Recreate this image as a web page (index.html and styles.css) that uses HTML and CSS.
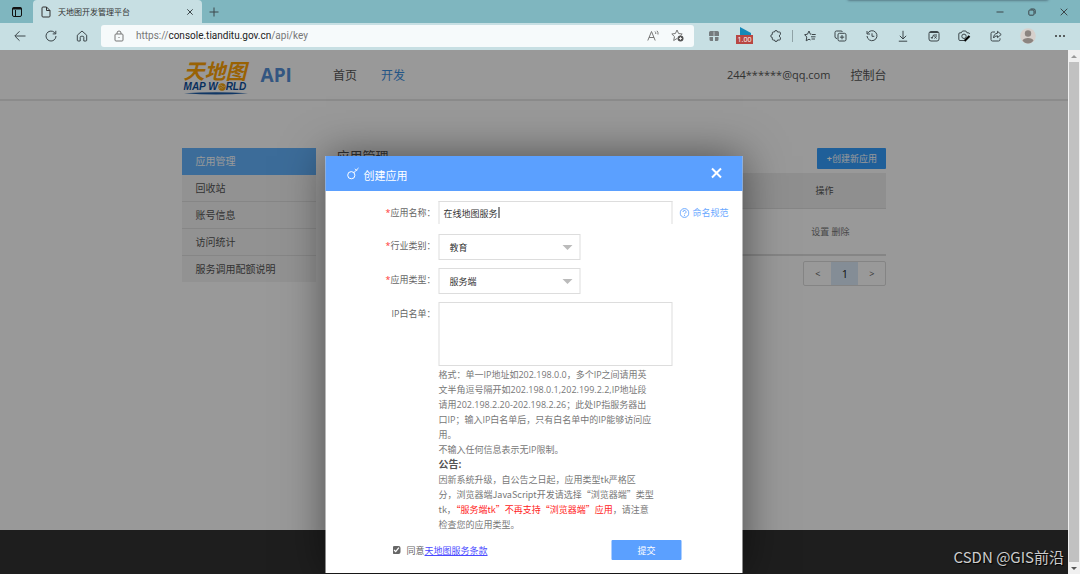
FILE: index.html
```html
<!DOCTYPE html>
<html lang="zh-CN">
<head>
<meta charset="utf-8">
<title>天地图开发管理平台</title>
<link rel="stylesheet" href="styles.css">
</head>
<body>
<div class="browser">
  <div class="tabbar">
    <span class="top-shadow"></span>
    <button class="icon-btn workspace" aria-label="标签页操作"><svg width="12" height="12" viewBox="0 0 12 12"><rect x="1.5" y="1.5" width="9" height="9" rx="1.5"/><path d="M1.5 2.500h9" stroke-width="2"/><path d="M4.500 4v6"/></svg></button>
    <div class="tab">
      <svg width="10" height="12" viewBox="0 0 10 12"><path d="M1 2a1 1 0 0 1 1-1h3.500L9 4.500V10a1 1 0 0 1-1 1H2a1 1 0 0 1-1-1zM5.500 1v3.500H9"/></svg>
      <span class="tab-title">天地图开发管理平台</span>
      <button class="icon-btn" aria-label="关闭标签页"><svg width="8" height="8" viewBox="0 0 8 8"><path d="M1.300 1.300l5.400 5.400M6.700 1.300L1.300 6.700"/></svg></button>
    </div>
    <button class="icon-btn new-tab" aria-label="新建标签页"><svg width="10" height="10" viewBox="0 0 10 10"><path d="M5 .5v9M.5 5h9"/></svg></button>
    <div class="window-controls">
      <button class="icon-btn" aria-label="最小化"><svg width="8" height="8" viewBox="0 0 8 8"><path d="M.5 4h7"/></svg></button>
      <button class="icon-btn" aria-label="还原"><svg width="8" height="8" viewBox="0 0 8 8"><rect x=".8" y="2" width="5.200" height="5.200" rx="1"/><path d="M2.500 1h3.300a1.400 1.400 0 0 1 1.400 1.400v3.300"/></svg></button>
      <button class="icon-btn" aria-label="关闭"><svg width="8" height="8" viewBox="0 0 8 8"><path d="M.7.7l6.600 6.600M7.300.7L.7 7.300"/></svg></button>
    </div>
  </div>

  <div class="toolbar">
    <button class="icon-btn tool" aria-label="后退"><svg width="12" height="12" viewBox="0 0 12 12"><path d="M11.500 6H1M5.500 1.300L.8 6l4.700 4.700"/></svg></button>
    <button class="icon-btn tool" aria-label="刷新"><svg width="12" height="12" viewBox="0 0 12 12"><path d="M11 6A5 5 0 1 1 9.300 2.300L10.600 3.700M10.800.8v3.100H7.700"/></svg></button>
    <button class="icon-btn tool" aria-label="主页"><svg width="12" height="12" viewBox="0 0 12 12"><path d="M1.300 5.200L6 1l4.700 4.200v5a.8.8 0 0 1-.8.8H7.800V7.300a1 1 0 0 0-1-1H5.200a1 1 0 0 0-1 1V11H2.100a.8.8 0 0 1-.8-.8z"/></svg></button>
    <div class="address">
      <svg class="lock" width="10" height="12" viewBox="0 0 10 12"><rect x="1" y="4" width="8" height="7" rx="1"/><path d="M3 4V3a2 2 0 0 1 4 0v1M5 7v1"/></svg>
      <span class="url">https://<b>console.tianditu.gov.cn</b>/api/key</span>
      <button class="icon-btn muted" aria-label="大声朗读"><svg width="12" height="12" viewBox="0 0 12 12"><path d="M.8 10.500L4.500 1.500l3.700 9M2 7.500h5M8 1.500q1 1 .8 2.500M10 .8q1.400 1.500 1 3.700"/></svg></button>
      <button class="icon-btn muted" aria-label="添加到收藏夹"><svg width="13" height="13" viewBox="0 0 13 13"><path d="M6 9.500l-3.300 2 .8-3.900L.8 5l3.600-.5L6 1l1.600 3.500 3.600.5L9.500 6.600"/><circle cx="9.500" cy="9.500" r="3" fill="#555" stroke="none"/><path d="M9.500 8v3M8 9.500h3" stroke="#fff" stroke-width=".8"/></svg></button>
    </div>
    <button class="icon-btn tool" aria-label="扩展"><svg width="12" height="12" viewBox="0 0 12 12"><path d="M1 6V2.500A1.500 1.500 0 0 1 2.500 1h7A1.500 1.500 0 0 1 11 2.500V6zM1.500 7H5v4H3a1.500 1.500 0 0 1-1.500-1.500zM7 7h3.500v2.500A1.500 1.500 0 0 1 9 11H7z" fill="#757b7e" stroke="none"/><path d="M6 1.500V6" stroke="#bcc4c7"/></svg></button>
    <button class="icon-btn tool speed" aria-label="播放速度 1.00"><svg width="12" height="8" viewBox="0 0 12 8"><path d="M1 0l11 6v2H1z" fill="#1689b8" stroke="none"/></svg><span class="badge">1.00</span></button>
    <button class="icon-btn tool" aria-label="扩展程序"><svg width="12" height="12" viewBox="0 0 12 12"><path d="M3.200 2h1.300a1.500 1.500 0 0 1 3 0h2a.9.9 0 0 1 .9.900V4.500a1.600 1.600 0 0 0 0 3v1.600a.9.9 0 0 1-.9.900h-2a1.500 1.500 0 0 1-3 0H3.200a.9.9 0 0 1-.9-.9V7.500a1.500 1.500 0 0 1 0-3V2.900A.9.9 0 0 1 3.200 2z"/></svg></button>
    <span class="separator"></span>
    <button class="icon-btn tool" aria-label="收藏夹"><svg width="12" height="12" viewBox="0 0 12 12"><path d="M7.500 4.200H6.300L5 1 3.500 4.200.6 4.700l2.200 2.300-.6 3.800L5 9.200l1.500.8M8 4.500h3.700M7 6.800h4.500M7.500 9h3.500"/></svg></button>
    <button class="icon-btn tool" aria-label="集锦"><svg width="13" height="12" viewBox="0 0 13 12"><path d="M3 8.500A2 2 0 0 1 1 7V2.500A1.500 1.500 0 0 1 2.500 1H7a1.500 1.500 0 0 1 1.500 1"/><rect x="4" y="3.300" width="8" height="7.700" rx="1.500"/><path d="M8 5v4.300M5.900 7.150h4.300"/></svg></button>
    <button class="icon-btn tool" aria-label="历史记录"><svg width="12" height="12" viewBox="0 0 12 12"><path d="M1.500 3.500A5 5 0 1 1 1 6M1 1v3h3M6 3.300v3h2.300"/></svg></button>
    <button class="icon-btn tool" aria-label="下载"><svg width="12" height="12" viewBox="0 0 12 12"><path d="M6 .8v8M2.800 5.800L6 9l3.200-3.200M1.800 11.200h8.400"/></svg></button>
    <button class="icon-btn tool" aria-label="数学求解器"><svg width="12" height="12" viewBox="0 0 12 12"><rect x="1" y="1.500" width="10" height="9.500" rx="2"/><path d="M2 2.500h8M3 7l1 1.500L5.500 5H9M6.500 6.200L8.500 8.500M8.500 6.200L6.500 8.500"/></svg></button>
    <button class="icon-btn tool" aria-label="网页捕获"><svg width="13" height="12" viewBox="0 0 13 12"><path d="M6 10.500H2A1.200 1.200 0 0 1 .8 9.300V4A1.200 1.200 0 0 1 2 2.800h1.300L4.500 1h3.300L9 2.800h1.300A1.200 1.200 0 0 1 11.500 4"/><circle cx="6" cy="6.300" r="2.200"/><path d="M6.500 11l5-5" stroke="#000" stroke-width="2.200"/></svg></button>
    <button class="icon-btn tool" aria-label="共享"><svg width="12" height="12" viewBox="0 0 12 12"><path d="M5 2H2.500A1.500 1.500 0 0 0 1 3.500v6A1.500 1.500 0 0 0 2.500 11h6A1.500 1.500 0 0 0 10 9.500V8.300M7.500 1.300L11.200 4.500 7.500 7.600V5.800Q4.800 5.800 3.600 8 3.800 3.500 7.500 3.200z"/></svg></button>
    <button class="icon-btn tool avatar" aria-label="个人资料"><svg width="16" height="16" viewBox="0 0 16 16"><g stroke="none"><circle cx="8" cy="8" r="7.800" fill="#d6d0cc"/><circle cx="8" cy="5.500" r="3.200" fill="#8b8480"/><path d="M2.500 12.500Q3.500 10 8 10t5.500 2.500Q11.500 15.500 8 15.500T2.500 12.500z" fill="#8b8480"/></g></svg></button>
    <button class="icon-btn tool" aria-label="设置及其他"><svg width="12" height="4" viewBox="0 0 12 4"><g fill="#333" stroke="none"><circle cx="2" cy="2" r="1"/><circle cx="6" cy="2" r="1"/><circle cx="10" cy="2" r="1"/></g></svg></button>
  </div>

  <div class="viewport">
    <div class="page">
      <header class="site-header">
        <div class="container header-row">
          <a class="logo" href="#" aria-label="天地图 MAP WORLD">
            <span class="logo-cn">天地图</span>
            <span class="logo-en">MAP W<svg width="8" height="8" viewBox="0 0 8 8"><circle cx="4" cy="4" r="3.700" fill="#f5a30a"/><path d="M1 3q2-2 3 0t3 0M1 5.500q2-2 3.500 0" fill="none" stroke="#ffe0a0" stroke-width=".8"/></svg>RLD</span>
            <svg class="logo-line" width="64" height="3" viewBox="0 0 64 3"><path d="M0 1.200Q32-.6 64 1.200 32 4 0 1.200z" fill="#1c5ca8"/></svg>
          </a>
          <span class="api">API</span>
          <nav class="nav"><a href="#">首页</a><a class="current" href="#">开发</a></nav>
          <div class="account"><a class="mail" href="#">244******@qq.com</a><a href="#">控制台</a></div>
        </div>
      </header>
      <main class="container content">
        <nav class="sidebar">
          <a class="active" href="#">应用管理</a><a href="#">回收站</a><a href="#">账号信息</a><a href="#">访问统计</a><a href="#">服务调用配额说明</a>
        </nav>
        <section class="apps">
          <div class="apps-head"><h1>应用管理</h1><button class="create"><b>+</b>创建新应用</button></div>
          <table class="apps-table">
            <thead><tr><th></th><th>操作</th></tr></thead>
            <tbody><tr><td></td><td><a href="#">设置</a> <a href="#">删除</a></td></tr></tbody>
          </table>
          <div class="pager"><button>&lt;</button><button class="on">1</button><button>&gt;</button></div>
        </section>
      </main>
      <footer class="site-footer"></footer>
      <div class="backdrop"></div>
      <div class="dialog" role="dialog" aria-labelledby="dialog-title">
        <div class="dialog-head">
          <svg width="13" height="13" viewBox="0 0 13 13"><circle cx="4.800" cy="8.200" r="3.600"/><path d="M7.300 5.700L12 1M8.500 1.800l2 2"/></svg>
          <h2 id="dialog-title">创建应用</h2>
          <button class="dialog-close" aria-label="关闭"><svg width="12" height="12" viewBox="0 0 12 12"><path d="M1.500 1.500l9 9M10.500 1.500l-9 9"/></svg></button>
        </div>
        <form class="form">
          <label for="name"><i>*</i>应用名称：</label>
          <div class="field name-field"><input class="box" id="name" type="text" value="在线地图服务"><span class="caret"></span></div>
          <a class="naming" href="#"><svg width="10" height="10" viewBox="0 0 10 10"><circle cx="5" cy="5" r="4.400"/><path d="M3.500 4a1.500 1.500 0 1 1 2.300 1.200Q5 5.600 5 6.200M5 7v.9"/></svg>命名规范</a>
          <label for="industry"><i>*</i>行业类别：</label>
          <div class="field"><select class="box" id="industry"><option>教育</option></select><span class="arrow"></span></div>
          <label for="type"><i>*</i>应用类型：</label>
          <div class="field"><select class="box" id="type"><option>服务端</option></select><span class="arrow"></span></div>
          <label for="ips">IP白名单：</label>
          <textarea class="box" id="ips"></textarea>
          <div class="help">
            <p>格式：单一IP地址如202.198.0.0，多个IP之间请用英<br>文半角逗号隔开如202.198.0.1,202.199.2.2,IP地址段<br>请用202.198.2.20-202.198.2.26；此处IP指服务器出<br>口IP；输入IP白名单后，只有白名单中的IP能够访问应<br>用。</p>
            <p>不输入任何信息表示无IP限制。</p>
            <h3>公告:</h3>
            <p class="notice">因新系统升级，自公告之日起，应用类型tk严格区<br>分，浏览器端JavaScript开发请选择“浏览器端”类型<br>tk，<em>“服务端tk”不再支持“浏览器端”应用</em>，请注意<br>检查您的应用类型。</p>
          </div>
          <div class="form-foot">
            <input id="agree" type="checkbox" checked><label for="agree">同意<a href="#">天地图服务条款</a></label>
            <button class="submit" type="button">提交</button>
          </div>
        </form>
      </div>
      <span class="watermark">CSDN @GIS前沿</span>
    </div>
    <div class="scrollbar"><span class="up"></span><span class="thumb"></span><span class="down"></span></div>
  </div>
</div>
</body>
</html>
```

FILE: styles.css
```css
* { box-sizing: border-box; }
body { margin: 0; font-family: "Open Sans", "Noto Sans CJK SC", sans-serif; font-size: 9px; color: #555; }
button, input, select, textarea { font: inherit; color: inherit; margin: 0; }
h1, h2, h3, p { margin: 0; font-weight: 400; }
a { color: inherit; text-decoration: none; }
svg { flex: none; fill: none; stroke: currentColor; stroke-width: 1; }
.browser { height: 100vh; display: flex; flex-direction: column; overflow: hidden; }

.icon-btn { display: flex; align-items: center; justify-content: center; border: 0; padding: 0; background: none; color: #3c464a; }
.tabbar { position: relative; display: flex; height: 23px; background: #7fb6bf; }
.top-shadow { position: absolute; top: -4px; right: 32px; width: 200px; height: 4px; box-shadow: 0 0 3px #345; }
.workspace { width: 33px; color: #111; }
.tab { display: flex; align-items: center; gap: 7px; width: 169px; padding: 0 8px; background: #c7dfe3; border-radius: 4px 4px 0 0; color: #333; }
.tab-title { flex: 1; font-size: 8px; white-space: nowrap; }
.new-tab { width: 24px; }
.window-controls { display: flex; margin-left: auto; }
.window-controls .icon-btn { width: 32px; }

.toolbar { display: flex; align-items: center; height: 27px; padding: 0 5px 2px 4px; background: #c7dfe3; }
.tool { width: 31px; height: 22px; }
.address { display: flex; flex: 1; align-items: center; gap: 12px; height: 22px; margin: 0 4px; padding: 0 10px 0 13px; background: #f6fafb; border-radius: 3px; color: #777; }
.url { flex: 1; font-family: Roboto, sans-serif; font-size: 10px; }
.url b { color: #222; font-weight: 400; }
.muted { color: #777; }
.speed { flex-direction: column; }
.badge { padding: 0 2px; background: #b84743; color: #fff; font-size: 7px; line-height: 9px; }
.separator { width: 1px; height: 12px; margin: 0 1px; background: #8fa2a6; }
.avatar { width: 33px; }

.viewport { display: flex; flex: 1; min-height: 0; }
.page { position: relative; display: flex; flex: 1; flex-direction: column; overflow: hidden; background: #fff; }
.container { width: 66%; margin: 0 auto; }
.site-header { height: 51px; border-bottom: 2px solid #e8e8e8; }
.header-row { display: flex; align-items: center; height: 49px; font-size: 12px; }
.logo { display: flex; flex-direction: column; width: 66px; padding: 4px 0 0 2px; }
.logo-cn { font-family: "Noto Sans CJK SC", sans-serif; font-size: 21px; line-height: 24px; font-weight: 700; font-style: italic; color: #ffa408; }
.logo-en { display: flex; align-items: center; font-family: "Liberation Sans", sans-serif; font-size: 10px; line-height: 10px; font-weight: 700; font-style: italic; color: #0d4e9c; white-space: pre; }
.logo-en svg, .logo-line { stroke: none; }
.api { margin-left: 13px; font-size: 19px; font-weight: 700; color: #5590d8; }
.nav { display: flex; gap: 24px; margin-left: 41px; }
.nav .current { color: #3d8fe0; }
.account { display: flex; align-items: center; gap: 20px; margin-left: auto; }
.mail { font-size: 11px; }

.content { display: flex; flex: 1; gap: 21px; padding-top: 47px; }
.sidebar { width: 134px; font-size: 10px; }
.sidebar a { display: flex; align-items: center; height: 27px; padding: 0 0 1px 14px; background: #f3f3f3; border-bottom: 1px solid #e0e0e0; }
.sidebar .active { background: #64b5ff; border-color: #64b5ff; color: #fff; }
.sidebar a:last-child { height: 26px; border-bottom: 0; }
.apps { flex: 1; }
.apps-head { display: flex; justify-content: space-between; height: 25px; }
.apps-head h1 { font-size: 13px; line-height: 17px; }
.create { width: 69px; height: 21px; padding: 0; border: 0; border-radius: 1px; background: #349eff; color: #fff; }
.apps-table { width: 100%; border-collapse: collapse; border-bottom: 2px solid #dedede; }
.apps-table th { height: 35px; background: #efefef; border-bottom: 1px solid #e0e0e0; font-weight: 400; }
.apps-table td { height: 47px; text-align: center; color: #777; }
.apps-table th:last-child, .apps-table td:last-child { width: 112px; padding: 0; }
.apps-table th:last-child { padding-right: 12px; }
.pager { display: flex; width: 83px; height: 25px; margin: 5px 0 0 auto; border: 1px solid #ddd; border-radius: 2px; }
.pager button { flex: 1; padding: 0; border: 0; background: none; }
.pager .on { background: #dcecfa; font-size: 11px; color: #222; }
.site-footer { height: 44px; background: #333; }

.backdrop { position: absolute; inset: 0; background: rgba(0, 0, 0, .4); }
.dialog { position: absolute; top: 106px; bottom: 1px; left: 50%; width: 417px; transform: translateX(-50%); display: flex; flex-direction: column; background: #fff; box-shadow: 0 0 40px rgba(0, 0, 0, .5); color: #666; }
.dialog-head { display: flex; align-items: center; gap: 4px; height: 35px; padding: 0 20px 0 21px; background: #5ba0ff; color: #fff; }
.dialog-head h2 { flex: 1; padding-top: 3px; font-size: 11px; }
.dialog-close { display: flex; padding: 0 0 2px; border: 0; background: none; color: #fff; }
.dialog-close svg { stroke-width: 2; }
.form { display: grid; grid-template-columns: 110px 234px 1fr; column-gap: 3px; padding-top: 10px; }
.form > label { grid-column: 1; text-align: right; line-height: 23px; white-space: nowrap; }
.form i { color: #f33; font-style: normal; }
.field { position: relative; grid-column: 2; height: 26px; margin-bottom: 8px; }
.name-field { height: 23px; margin-bottom: 10px; }
.box { width: 100%; height: 100%; border: 1px solid #ddd; background: #fff; border-radius: 0; outline: 0; }
.field input { padding: 0 4px; border-bottom: 0; color: #333; }
.caret { position: absolute; left: 60px; top: 6px; width: 1px; height: 11px; background: #222; }
.field select { width: 142px; padding: 0 10px; appearance: none; color: #333; }
.arrow { position: absolute; left: 124px; top: 11px; border: 5px solid transparent; border-top-color: #bbb; border-bottom: 0; }
.naming { display: flex; align-items: center; gap: 3px; height: 23px; margin-left: 4px; color: #6aa8ff; white-space: nowrap; }
.form textarea { grid-column: 2; height: 64px; resize: none; }
.help { grid-column: 2; padding-top: 1px; line-height: 15px; white-space: nowrap; color: #777; }
.help h3 { font-size: 10px; line-height: 15px; font-weight: 700; color: #555; }
.help em { color: #f22; font-style: normal; }
.notice { font-family: "Noto Sans CJK SC", sans-serif; }
.form-foot { display: flex; align-items: center; grid-column: 1 / -1; padding: 8px 61px 0 67px; }
.form-foot input { width: 8px; height: 8px; margin-right: 6px; accent-color: #666; }
.form-foot a { color: #4a4aff; text-decoration: underline; }
.submit { width: 70px; height: 20px; margin-left: auto; padding: 0; border: 0; border-radius: 1px; background: #5ba0ff; color: #fff; }
.watermark { position: absolute; right: 4px; bottom: 6px; font-family: "Noto Sans CJK SC", sans-serif; font-size: 15px; line-height: 22px; color: #ccc; text-shadow: 1px 1px 1px #000; }

.scrollbar { display: flex; flex-direction: column; align-items: center; width: 12px; background: #f0f0f0; }
.up, .down { height: 12px; display: flex; align-items: center; }
.up::before, .down::before { content: ""; border: 3px solid transparent; }
.up::before { border-bottom-color: #999; border-top: 0; }
.down::before { border-top-color: #555; border-bottom: 0; }
.thumb { flex: 1; width: 10px; background: #c1c1c1; }
```
